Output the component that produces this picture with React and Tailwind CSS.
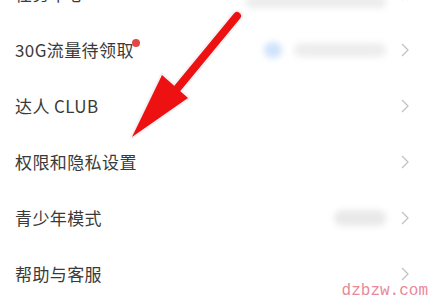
import React from 'react';

const rows = [
  { label: '任务中心', extra: 'top' },
  { label: '30G流量待领取', dot: true, extra: 'flow' },
  { label: '达人 CLUB' },
  { label: '权限和隐私设置' },
  { label: '青少年模式', extra: 'teen' },
  { label: '帮助与客服' },
];

const Chevron = () => (
  <svg width="10" height="16" viewBox="0 0 10 16" className="shrink-0">
    <path d="M2 2 L8 8 L2 14" fill="none" stroke="#c2c2c2" strokeWidth="1.3" />
  </svg>
);

const Extra = ({ type }) => {
  if (type === 'top')
    return <div className="h-[12px] w-[140px] rounded-full bg-[#ececec] blur-[3px] mt-[16px]" />;
  if (type === 'flow')
    return (
      <div className="flex items-center gap-3">
        <div className="h-[16px] w-[18px] rounded-full bg-[#cfe3fb] blur-[3px]" />
        <div className="h-[14px] w-[92px] rounded-full bg-[#ededed] blur-[3px]" />
      </div>
    );
  if (type === 'teen')
    return <div className="h-[16px] w-[52px] rounded-full bg-[#e9e9e9] blur-[3px]" />;
  return null;
};

const App = () => {
  return (
    <div className="relative w-[430px] h-[300px] overflow-hidden bg-white" style={{ fontFamily: '"Noto Sans CJK SC", "Noto Sans", sans-serif' }}>
      <div className="-mt-[34px]">
        {rows.map((r) => (
          <div key={r.label} className="flex items-center h-[56px] pl-[15px] pr-[20px]">
            <div className="relative text-[17px] tracking-[0.4px] text-[#3a3a3a]">
              {r.label}
              {r.dot && <span className="absolute -right-[6px] top-[2px] w-[8px] h-[8px] rounded-full bg-[#e04848]" />}
            </div>
            <div className="flex-1" />
            <div className="flex items-center gap-[14px]">
              <Extra type={r.extra} />
              <Chevron />
            </div>
          </div>
        ))}
      </div>

      <svg className="absolute left-0 top-0" width="430" height="300" viewBox="0 0 430 300">
        <g stroke="#f2f2f2" strokeLinejoin="round" strokeLinecap="round" fill="none">
          <line x1="237" y1="16" x2="178" y2="88" strokeWidth="12" />
          <polygon points="132,137 162,75 188,98" strokeWidth="4" />
        </g>
        <line x1="237" y1="16" x2="176" y2="90" stroke="#ee1111" strokeWidth="8" strokeLinecap="round" />
        <polygon points="132,137 162,75 188,98" fill="#ee1111" />
      </svg>

      <div className="absolute right-[2px] bottom-[1px] text-[16px] leading-none text-[#e8899a]" style={{ fontFamily: '"Liberation Mono", monospace' }}>
        dzbzw.com
      </div>
    </div>
  );
};

export default App;
